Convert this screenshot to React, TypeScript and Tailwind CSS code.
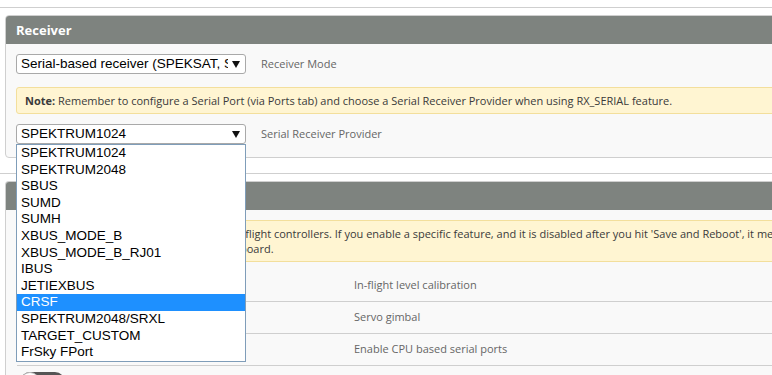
import React from 'react';

const providers = [
  'SPEKTRUM1024',
  'SPEKTRUM2048',
  'SBUS',
  'SUMD',
  'SUMH',
  'XBUS_MODE_B',
  'XBUS_MODE_B_RJ01',
  'IBUS',
  'JETIEXBUS',
  'CRSF',
  'SPEKTRUM2048/SRXL',
  'TARGET_CUSTOM',
  'FrSky FPort',
];

const features = [
  { name: 'INFLIGHT_ACC_CAL', desc: 'In-flight level calibration' },
  { name: 'SERVO_TILT', desc: 'Servo gimbal' },
  { name: 'SOFTSERIAL', desc: 'Enable CPU based serial ports' },
  { name: 'SONAR', desc: 'Sonar' },
];

function Arrow() {
  return (
    <svg width="8" height="7" viewBox="0 0 8 7" className="absolute right-[6px] top-[7px]">
      <path d="M0 0 L8 0 L4 7 Z" fill="#111" />
    </svg>
  );
}

function Select({ value, open }: { value: string; open?: boolean }) {
  return (
    <div className="relative w-[230px] h-[20px] shrink-0">
      <div className="h-full bg-white border border-[#a9a9a9] rounded-[3px] pl-[4px] font-['Liberation_Sans',Arial,sans-serif]">
        <div className="w-[207px] overflow-hidden whitespace-nowrap text-[13.5px] leading-[18px] text-black">{value}</div>
      </div>
      <Arrow />
      {open && (
        <div className="absolute left-0 top-[20px] w-[230px] bg-white border border-[#7f9db9] z-10 font-['Liberation_Sans',Arial,sans-serif]">
          {providers.map((p) => (
            <div
              key={p}
              className={
                p === 'CRSF'
                  ? 'h-[16.6px] pl-[4px] text-[13.5px] leading-[16.6px] bg-[#1e90ff] text-white'
                  : 'h-[16.6px] pl-[4px] text-[13.5px] leading-[16.6px] text-black'
              }
            >
              {p}
            </div>
          ))}
        </div>
      )}
    </div>
  );
}

function Note({ children }: { children: React.ReactNode }) {
  return (
    <div className="bg-[#fff5d2] border border-[#f3df9c] rounded-[3px] px-[8px] py-[5px] text-[11px] leading-[15px] text-[#3a3a3a] whitespace-nowrap">
      {children}
    </div>
  );
}

export default function App() {
  return (
    <div className="w-[772px] h-[375px] overflow-hidden bg-white font-['Open_Sans',sans-serif]">
      <div className="h-[8px] border-b border-[#cfcfcf]" />
      <div className="ml-[5px] mt-[7px] w-[900px] border border-[#cfcfcf] rounded-[4px] bg-[#f9f9f9]">
        <div className="h-[28px] bg-[#7e837f] rounded-t-[3px] pl-[10px] text-[13px] font-bold leading-[28px] text-white">
          Receiver
        </div>
        <div className="pl-[10px] pt-[10px] pb-[13px]">
          <div className="flex items-center gap-[15px]">
            <Select value="Serial-based receiver (SPEKSAT, SBUS, SUMD)" />
            <span className="text-[11px] text-[#666]">Receiver Mode</span>
          </div>
          <div className="mt-[13px]">
            <Note>
              <b>Note:</b> Remember to configure a Serial Port (via Ports tab) and choose a Serial Receiver Provider
              when using RX_SERIAL feature.
            </Note>
          </div>
          <div className="mt-[10px] flex items-center gap-[15px] relative z-10">
            <Select value="SPEKTRUM1024" open />
            <span className="text-[11px] text-[#666]">Serial Receiver Provider</span>
          </div>
        </div>
      </div>

      <div className="mt-[15px] h-[1px] bg-[#cfcfcf]" />
      <div className="ml-[5px] mt-[7px] w-[900px] border-l border-t border-[#cfcfcf] rounded-tl-[4px] bg-[#f9f9f9]">
        <div className="h-[28px] bg-[#7e837f] rounded-tl-[3px] pl-[10px] text-[13px] font-bold leading-[28px] text-white">
          Other Features
        </div>
        <div className="pl-[10px] pt-[10px]">
          <Note>
            <b>Note:</b> Not all features are supported by all flight controllers. If you enable a specific feature,
            and it is disabled after you hit 'Save and Reboot', it means
            <br />
            that this feature is not supported on your board.
          </Note>
          <div className="mt-[8px] ml-[1px]">
            {features.map((f) => (
              <div key={f.name} className="flex items-center h-[32px] border-b border-[#cfcfcf]">
                <div className="w-[63px] pl-[3px] flex items-center">
                  <div className="relative w-[45px] h-[20px] rounded-full bg-[#555]">
                    <div className="absolute left-0 top-0 w-[20px] h-[20px] rounded-full bg-white border border-[#bbb]" />
                  </div>
                </div>
                <div className="w-[274px] text-[11px] text-[#333]">{f.name}</div>
                <div className="text-[11px] text-[#666]">{f.desc}</div>
              </div>
            ))}
          </div>
        </div>
      </div>
    </div>
  );
}
